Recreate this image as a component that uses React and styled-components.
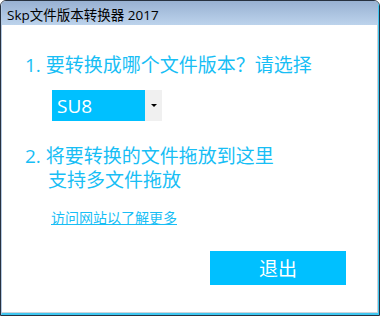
import styled, { createGlobalStyle } from 'styled-components'

const GlobalStyle = createGlobalStyle`
    html, body {
        margin: 0;
        padding: 0;
        background: #ffffff;
    }
    * {
        box-sizing: border-box;
    }
`;

const FONT = `"Open Sans", "Noto Sans CJK SC", sans-serif`;
const CYAN = '#00c0ff';
const TEXT_CYAN = '#18bef5';

const Window = styled.div`
    width: 380px;
    height: 316px;
    border: 1px solid #27313f;
    border-radius: 6px 6px 0 0;
    overflow: hidden;
    display: flex;
    font-family: ${FONT};
`;

const Frame = styled.div`
    flex: 1;
    display: flex;
    flex-direction: column;
    border-left: 1px solid #b3c9e3;
    border-right: 1px solid #3ec6f0;
    border-bottom: 2px solid #3ec6f0;
`;

const TitleBar = styled.div`
    height: 24px;
    flex-shrink: 0;
    display: flex;
    align-items: center;
    padding: 1px 0 0 5px;
    background: linear-gradient(to bottom, #98b1d2, #bcd3ec);
    font-size: 13.5px;
    color: #000000;
`;

const Client = styled.div`
    flex: 1;
    display: flex;
    flex-direction: column;
    padding: 28px 0 0 23px;
    background: #ffffff;
    border-right: 1px solid #cdd3da;
    border-bottom: 1px solid #cdd3da;
`;

const Step = styled.div`
    font-size: 19px;
    line-height: 24px;
    color: ${TEXT_CYAN};
    margin-top: ${({ $gap }) => $gap || 0}px;
`;

const StepLine = styled.div`
    padding-left: 23px;
    line-height: 25px;
`;

const Select = styled.div`
    display: flex;
    width: 110px;
    height: 31px;
    margin: 13px 0 0 27px;
`;

const SelectValue = styled.div`
    flex: 1;
    display: flex;
    align-items: center;
    padding: 1px 0 0 5px;
    background: ${CYAN};
    color: #ffffff;
    font-size: 19px;
`;

const SelectArrow = styled.div`
    width: 17px;
    display: flex;
    align-items: center;
    justify-content: center;
    background: #f0f0f0;
    &::after {
        content: '';
        border-left: 3px solid transparent;
        border-right: 3px solid transparent;
        border-top: 3px solid #000000;
    }
`;

const MoreLink = styled.a`
    align-self: flex-start;
    margin: 16px 0 0 26px;
    font-size: 14px;
    line-height: 18px;
    color: ${TEXT_CYAN};
    text-decoration: underline;
    cursor: pointer;
`;

const ExitButton = styled.button`
    align-self: flex-start;
    width: 136px;
    height: 34px;
    margin: 24px 0 0 185px;
    border: none;
    background: ${CYAN};
    color: #ffffff;
    font-family: ${FONT};
    font-size: 19px;
    padding: 0;
    cursor: pointer;
`;

const App = () => {
    return (
        <>
            <GlobalStyle />
            <Window>
                <Frame>
                    <TitleBar>Skp文件版本转换器 2017</TitleBar>
                    <Client>
                        <Step>1. 要转换成哪个文件版本？请选择</Step>
                        <Select>
                            <SelectValue>SU8</SelectValue>
                            <SelectArrow />
                        </Select>
                        <Step $gap={23}>
                            <div>2. 将要转换的文件拖放到这里</div>
                            <StepLine>支持多文件拖放</StepLine>
                        </Step>
                        <MoreLink>访问网站以了解更多</MoreLink>
                        <ExitButton>退出</ExitButton>
                    </Client>
                </Frame>
            </Window>
        </>
    )
}

export default App
